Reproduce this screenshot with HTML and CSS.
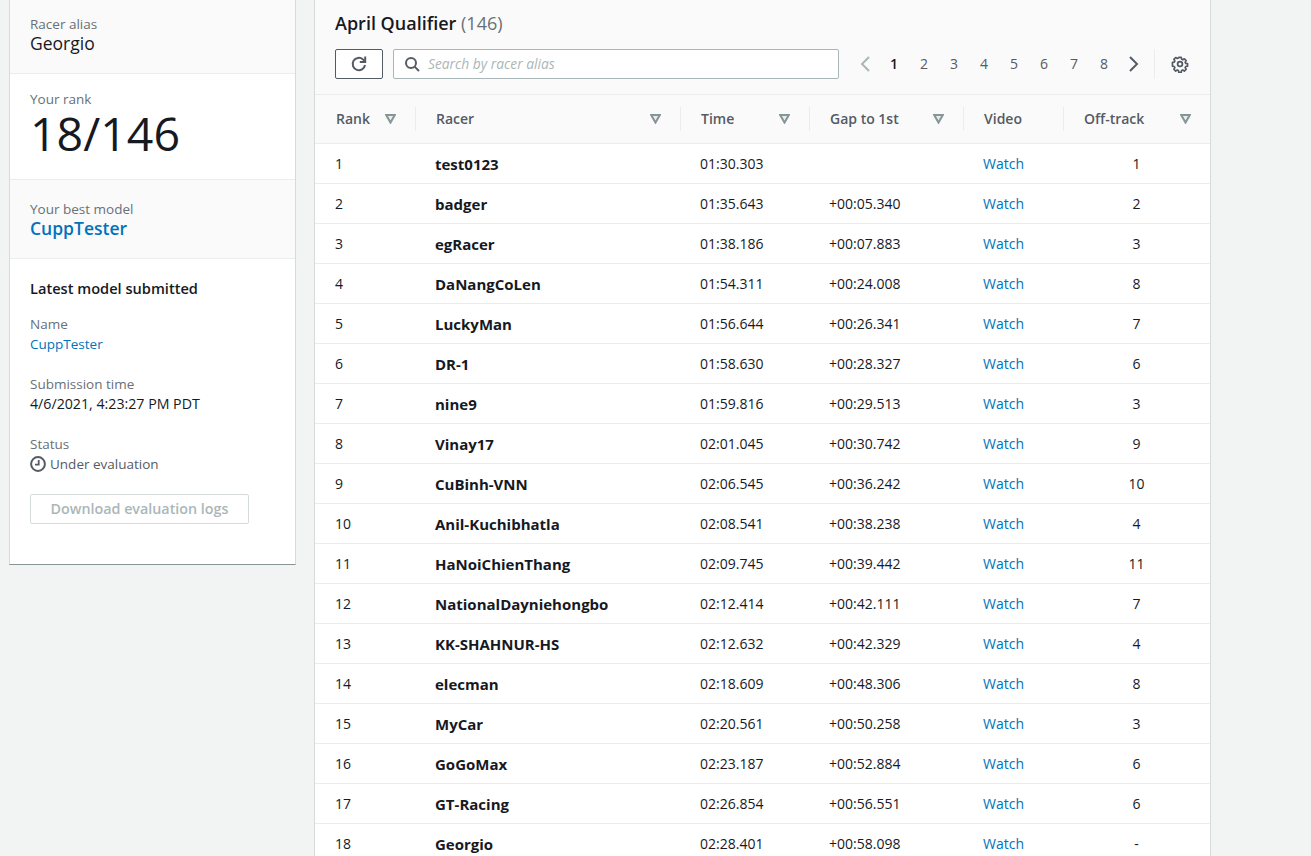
FILE: index.html
```html
<!DOCTYPE html>
<html lang="en">
<head>
  <meta charset="UTF-8" />
  <title>April Qualifier</title>
  <link rel="stylesheet" href="styles.css">
</head>
<body>
<svg class="defs" width="0" height="0">
  <symbol id="sort" viewBox="0 0 11 10"><path d="M1.2 1h8.6L5.5 8.6z" fill="#eaeded" stroke="#879596" stroke-width="2"/></symbol>
</svg>
<div class="page">

  <!-- Racer summary -->
  <aside class="summary">
    <section class="block shaded alias">
      <div class="label">Racer alias</div>
      <div class="alias-name">Georgio</div>
    </section>
    <section class="block rank">
      <div class="label">Your rank</div>
      <div class="rank-value">18/146</div>
    </section>
    <section class="block shaded best">
      <div class="label">Your best model</div>
      <a class="best-link" href="#">CuppTester</a>
    </section>
    <section class="block latest">
      <h3>Latest model submitted</h3>
      <div class="field">
        <div class="label">Name</div>
        <a class="small-link" href="#">CuppTester</a>
      </div>
      <div class="field">
        <div class="label">Submission time</div>
        <div class="date">4/6/2021, 4:23:27 PM PDT</div>
      </div>
      <div class="field">
        <div class="label">Status</div>
        <div class="status">
          <svg width="16" height="16" viewBox="0 0 16 16"><circle cx="8" cy="8" r="6.9" fill="none" stroke="#545b64" stroke-width="2"/><path d="M8.7 4v4.7H5" fill="none" stroke="#545b64" stroke-width="1.8"/></svg>
          Under evaluation
        </div>
      </div>
      <button class="logs" disabled>Download evaluation logs</button>
    </section>
  </aside>

  <!-- Leaderboard -->
  <main class="board">
    <div class="board-head">
      <h2>April Qualifier <span>(146)</span></h2>
      <div class="tools">
        <button class="refresh">
          <svg width="18" height="18" viewBox="0 0 18 18"><path d="M15 10a6.2 6.2 0 1 1-2-5.6L14.6 6" fill="none" stroke="#545b64" stroke-width="2"/><path d="M15.2 1.5v5.4H9.8" fill="none" stroke="#545b64" stroke-width="2"/></svg>
        </button>
        <div class="search">
          <svg width="16" height="16" viewBox="0 0 16 16"><circle cx="7" cy="7" r="5" fill="none" stroke="#545b64" stroke-width="2"/><path d="M10.6 10.6L15 15" stroke="#545b64" stroke-width="2"/></svg>
          <span>Search by racer alias</span>
        </div>
        <div class="pages">
          <svg class="arrow prev" width="10" height="16" viewBox="0 0 10 16"><path d="M9 1L2 8l7 7" fill="none" stroke="#aab7b8" stroke-width="2"/></svg>
          <span class="current">1</span><span>2</span><span>3</span><span>4</span><span>5</span><span>6</span><span>7</span><span>8</span>
          <svg class="arrow next" width="10" height="16" viewBox="0 0 10 16"><path d="M1 1l7 7-7 7" fill="none" stroke="#545b64" stroke-width="2"/></svg>
        </div>
        <div class="settings">
          <svg width="18" height="18" viewBox="0 0 18 18"><path d="M7.6 1.5h2.8l.4 2.1 1.3.6 1.8-1.1 2 2-1.1 1.8.6 1.3 2.1.4v2.8l-2.1.4-.6 1.3 1.1 1.8-2 2-1.8-1.1-1.3.6-.4 2.1H7.6l-.4-2.1-1.3-.6-1.8 1.1-2-2 1.1-1.8-.6-1.3-2.1-.4V7.2l2.1-.4.6-1.3-1.1-1.8 2-2 1.8 1.1 1.3-.6z" transform="translate(1 1) scale(.89)" fill="none" stroke="#545b64" stroke-width="1.9" stroke-linejoin="round"/><circle cx="9" cy="9" r="2.4" fill="none" stroke="#545b64" stroke-width="1.8"/></svg>
        </div>
      </div>
    </div>

    <table>
      <colgroup>
        <col class="c-rank"><col class="c-racer"><col class="c-time"><col class="c-gap"><col class="c-video"><col class="c-off">
      </colgroup>
      <thead>
        <tr>
          <th><div class="th-in">Rank <svg class="sort"><use href="#sort"/></svg></div></th>
          <th><div class="th-in">Racer <svg class="sort"><use href="#sort"/></svg></div></th>
          <th><div class="th-in">Time <svg class="sort"><use href="#sort"/></svg></div></th>
          <th><div class="th-in">Gap to 1st <svg class="sort"><use href="#sort"/></svg></div></th>
          <th><div class="th-in">Video</div></th>
          <th><div class="th-in">Off-track <svg class="sort"><use href="#sort"/></svg></div></th>
        </tr>
      </thead>
      <tbody>
        <tr><td>1</td><td class="racer">test0123</td><td>01:30.303</td><td></td><td><a href="#">Watch</a></td><td class="off">1</td></tr>
        <tr><td>2</td><td class="racer">badger</td><td>01:35.643</td><td>+00:05.340</td><td><a href="#">Watch</a></td><td class="off">2</td></tr>
        <tr><td>3</td><td class="racer">egRacer</td><td>01:38.186</td><td>+00:07.883</td><td><a href="#">Watch</a></td><td class="off">3</td></tr>
        <tr><td>4</td><td class="racer">DaNangCoLen</td><td>01:54.311</td><td>+00:24.008</td><td><a href="#">Watch</a></td><td class="off">8</td></tr>
        <tr><td>5</td><td class="racer">LuckyMan</td><td>01:56.644</td><td>+00:26.341</td><td><a href="#">Watch</a></td><td class="off">7</td></tr>
        <tr><td>6</td><td class="racer">DR-1</td><td>01:58.630</td><td>+00:28.327</td><td><a href="#">Watch</a></td><td class="off">6</td></tr>
        <tr><td>7</td><td class="racer">nine9</td><td>01:59.816</td><td>+00:29.513</td><td><a href="#">Watch</a></td><td class="off">3</td></tr>
        <tr><td>8</td><td class="racer">Vinay17</td><td>02:01.045</td><td>+00:30.742</td><td><a href="#">Watch</a></td><td class="off">9</td></tr>
        <tr><td>9</td><td class="racer">CuBinh-VNN</td><td>02:06.545</td><td>+00:36.242</td><td><a href="#">Watch</a></td><td class="off">10</td></tr>
        <tr><td>10</td><td class="racer">Anil-Kuchibhatla</td><td>02:08.541</td><td>+00:38.238</td><td><a href="#">Watch</a></td><td class="off">4</td></tr>
        <tr><td>11</td><td class="racer">HaNoiChienThang</td><td>02:09.745</td><td>+00:39.442</td><td><a href="#">Watch</a></td><td class="off">11</td></tr>
        <tr><td>12</td><td class="racer">NationalDayniehongbo</td><td>02:12.414</td><td>+00:42.111</td><td><a href="#">Watch</a></td><td class="off">7</td></tr>
        <tr><td>13</td><td class="racer">KK-SHAHNUR-HS</td><td>02:12.632</td><td>+00:42.329</td><td><a href="#">Watch</a></td><td class="off">4</td></tr>
        <tr><td>14</td><td class="racer">elecman</td><td>02:18.609</td><td>+00:48.306</td><td><a href="#">Watch</a></td><td class="off">8</td></tr>
        <tr><td>15</td><td class="racer">MyCar</td><td>02:20.561</td><td>+00:50.258</td><td><a href="#">Watch</a></td><td class="off">3</td></tr>
        <tr><td>16</td><td class="racer">GoGoMax</td><td>02:23.187</td><td>+00:52.884</td><td><a href="#">Watch</a></td><td class="off">6</td></tr>
        <tr><td>17</td><td class="racer">GT-Racing</td><td>02:26.854</td><td>+00:56.551</td><td><a href="#">Watch</a></td><td class="off">6</td></tr>
        <tr><td>18</td><td class="racer">Georgio</td><td>02:28.401</td><td>+00:58.098</td><td><a href="#">Watch</a></td><td class="off">-</td></tr>
      </tbody>
    </table>
  </main>
</div>
</body>
</html>
```

FILE: styles.css
```css
html, body {
  height: 100%;
}
body {
  margin: 0;
  background: #f2f3f3;
  color: #16191f;
  font-family: "Open Sans", sans-serif;
  font-size: 14px;
  line-height: 20px;
  overflow: hidden;
}
a {
  color: #0073bb;
  text-decoration: none;
}
.defs {
  position: absolute;
}
.page {
  display: flex;
  align-items: flex-start;
  gap: 18px;
  padding-left: 9px;
  height: 856px;
  overflow: hidden;
}

/* left card */
.summary {
  width: 287px;
  height: 565px;
  flex: none;
  box-sizing: border-box;
  background: #fff;
  border-left: 1px solid #d5dbdb;
  border-right: 1px solid #d5dbdb;
  border-bottom: 1px solid #879596;
}
.block {
  padding: 0 20px;
  border-bottom: 1px solid #eaeded;
}
.shaded {
  background: #fafafa;
}
.label {
  color: #687078;
  font-size: 13.5px;
}
.alias {
  height: 59px;
  padding-top: 14px;
}
.alias-name {
  font-size: 17.5px;
  line-height: 18px;
}
.rank {
  height: 90px;
  padding-top: 15px;
}
.rank-value {
  font-size: 46.5px;
  line-height: 48px;
}
.best {
  height: 59px;
  padding-top: 19px;
}
.best-link {
  display: block;
  font-size: 17.5px;
  line-height: 18px;
  font-weight: 600;
}
.latest {
  border-bottom: 0;
  padding-top: 19px;
}
.latest h3 {
  margin: 0 0 16px;
  font-size: 14.6px;
  line-height: 20px;
  font-weight: 600;
}
.small-link {
  font-size: 13.5px;
}
.date {
  font-size: 14.2px;
}
.field {
  margin-bottom: 20px;
}
.status {
  display: flex;
  align-items: center;
  gap: 4px;
  color: #545b64;
  font-size: 13.5px;
}
.logs {
  display: block;
  width: 219px;
  height: 30px;
  padding: 0;
  background: #fff;
  border: 1px solid #d5dbdb;
  border-radius: 2px;
  color: #aab7b8;
  font: 600 14.3px/20px "Open Sans", sans-serif;
}

/* leaderboard */
.board {
  width: 897px;
  flex: none;
  box-sizing: border-box;
  background: #fff;
  border-left: 1px solid #d5dbdb;
  border-right: 1px solid #d5dbdb;
}
.board-head {
  background: #fafafa;
  height: 95px;
  padding: 13px 20px 0 20px;
  box-sizing: border-box;
  border-bottom: 1px solid #eaeded;
}
.board-head h2 {
  margin: 0 0 16px;
  font-size: 18px;
  line-height: 20px;
  font-weight: 600;
}
.board-head h2 span {
  font-weight: 400;
  color: #687078;
}
.tools {
  display: flex;
  align-items: center;
  height: 30px;
}
.refresh {
  width: 48px;
  height: 30px;
  padding: 0;
  display: flex;
  align-items: center;
  justify-content: center;
  background: #fff;
  border: 1px solid #545b64;
  border-radius: 2px;
}
.search {
  width: 446px;
  height: 30px;
  box-sizing: border-box;
  margin-left: 10px;
  padding-left: 10px;
  display: flex;
  align-items: center;
  gap: 8px;
  background: #fff;
  border: 1px solid #aab7b8;
  border-radius: 2px;
}
.search span {
  color: #aab7b8;
  font-size: 13.8px;
  font-style: italic;
}
.pages {
  display: flex;
  align-items: center;
  margin-left: 21px;
  color: #545b64;
}
.pages span {
  width: 30px;
  text-align: center;
}
.pages .current {
  color: #16191f;
  font-weight: 600;
}
.arrow {
  flex: none;
}
.prev {
  margin-right: 9px;
}
.next {
  margin-left: 10px;
}
.settings {
  height: 30px;
  margin-left: 15px;
  padding-left: 16px;
  display: flex;
  align-items: center;
  border-left: 1px solid #eaeded;
}

table {
  width: 895px;
  table-layout: fixed;
  border-collapse: collapse;
}
.c-rank { width: 100px; }
.c-racer { width: 265px; }
.c-time { width: 129px; }
.c-gap { width: 154px; }
.c-video { width: 100px; }
.c-off { width: 147px; }
th {
  height: 48px;
  padding: 0;
  background: #fafafa;
  border-bottom: 1px solid #eaeded;
  color: #545b64;
  font-weight: 600;
  text-align: left;
}
.th-in {
  height: 24px;
  padding: 0 19px 0 20px;
  display: flex;
  align-items: center;
  justify-content: space-between;
  border-left: 1px solid #eaeded;
}
th:first-child .th-in {
  border-left: 0;
  padding-left: 21px;
}
.sort {
  width: 11px;
  height: 10px;
}
td {
  height: 39px;
  padding: 0 0 0 20px;
  border-bottom: 1px solid #eaeded;
}
td.racer {
  font-size: 15px;
  font-weight: 700;
}
td.off {
  padding: 0;
  text-align: center;
}
```
